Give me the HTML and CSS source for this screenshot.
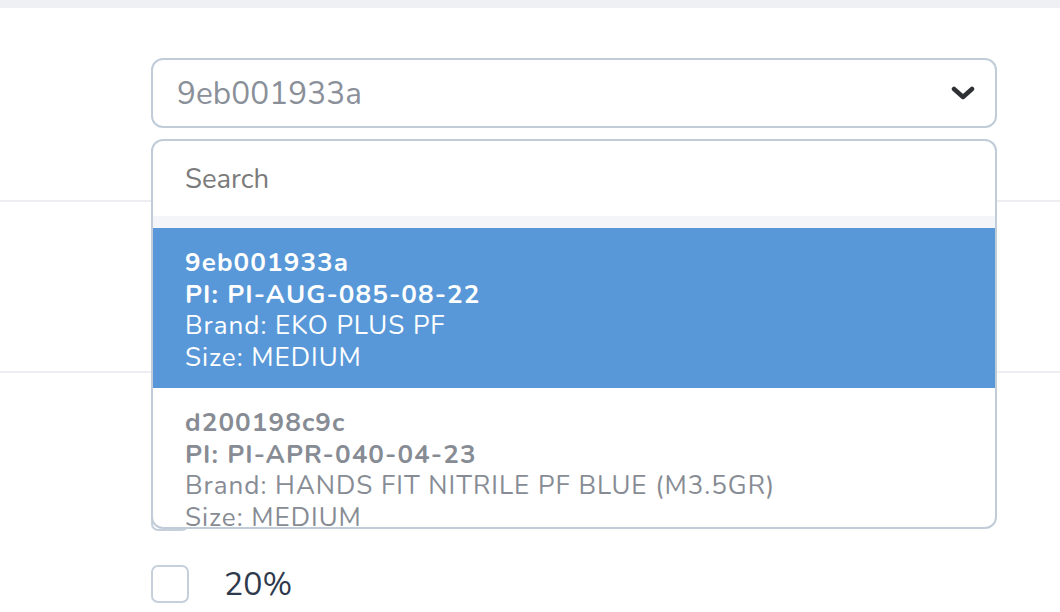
FILE: index.html
```html
<!DOCTYPE html>
<html lang="en">
<head>
<meta charset="utf-8">
<title>Select</title>
<link rel="stylesheet" href="styles.css">
</head>
<body>
<div class="topbar"></div>
<main class="form">
  <section class="row row-select">
    <div class="select-wrap">
      <div class="select">
        <span class="select-value">9eb001933a</span>
        <svg class="chevron" width="24" height="14" viewBox="0 0 24 14" aria-hidden="true">
          <polyline points="3,3 12,11 21,3" fill="none" stroke="#2f3033" stroke-width="4.5" stroke-linecap="round" stroke-linejoin="round"/>
        </svg>
      </div>
      <div class="dropdown">
        <div class="search">Search</div>
        <div class="gap-strip"></div>
        <div class="options">
          <div class="option active">
            <div class="opt-id">9eb001933a</div>
            <div class="opt-pi">PI: PI-AUG-085-08-22</div>
            <div>Brand: EKO PLUS PF</div>
            <div>Size: MEDIUM</div>
          </div>
          <div class="option">
            <div class="opt-id">d200198c9c</div>
            <div class="opt-pi">PI: PI-APR-040-04-23</div>
            <div>Brand: HANDS FIT NITRILE PF BLUE (M3.5GR)</div>
            <div>Size: MEDIUM</div>
          </div>
        </div>
      </div>
    </div>
  </section>
  <section class="row row-mid"></section>
  <section class="row row-checks">
    <div class="check"><span class="box"></span></div>
    <label class="check"><span class="box"></span><span class="check-label">20%</span></label>
  </section>
</main>
</body>
</html>
```
FILE: styles.css
```css
* { box-sizing: border-box; }
html, body { margin: 0; padding: 0; }
body {
  width: 1060px;
  height: 612px;
  overflow: hidden;
  background: #ffffff;
  font-family: "Nunito", Lato, "Noto Sans", sans-serif;
}
.topbar {
  height: 8px;
  background: #eef0f4;
}
.form {
  display: flex;
  flex-direction: column;
}
.row {
  border-bottom: 2px solid #eceef2;
}
.row-select {
  height: 194px;
  padding: 50px 63px 0 151px;
}
.row-mid {
  height: 171px;
}
.row-checks {
  border-bottom: none;
  display: flex;
  flex-direction: column;
  gap: 34px;
  padding: 120px 0 0 151px;
}
.select-wrap {
  position: relative;
  width: 846px;
}
.select {
  height: 70px;
  border: 2px solid #c1ccd9;
  border-radius: 12px;
  display: flex;
  align-items: center;
  justify-content: space-between;
  padding: 0 20px 0 24px;
  background: #fff;
}
.select-value {
  font-size: 31.5px;
  color: #8a9099;
  letter-spacing: 0.1px;
}
.chevron { display: block; }
.dropdown {
  position: absolute;
  left: 0;
  top: 81px;
  width: 846px;
  height: 390px;
  border: 2px solid #c1ccd9;
  border-radius: 12px;
  background: #fff;
  overflow: hidden;
  z-index: 5;
}
.search {
  height: 75px;
  display: flex;
  align-items: center;
  padding-left: 32px;
  font-size: 27.5px;
  color: #7b7b7b;
}
.gap-strip {
  height: 12px;
  background: #f4f5f9;
}
.option {
  height: 161px;
  padding: 19px 32px 0;
  font-size: 26px;
  line-height: 31.5px;
  letter-spacing: 1px;
  color: #878c94;
}
.option.active {
  background: #5898d8;
  color: #ffffff;
  height: 160px;
}
.opt-id, .opt-pi { font-weight: 700; letter-spacing: 1.1px; }
.check {
  display: flex;
  align-items: center;
  gap: 35px;
  height: 38px;
}
.box {
  flex: none;
  width: 38px;
  height: 38px;
  border: 2px solid #c6d0dc;
  border-radius: 7px;
  background: #fff;
}
.check-label {
  font-size: 32px;
  color: #2e3a4c;
}
```
